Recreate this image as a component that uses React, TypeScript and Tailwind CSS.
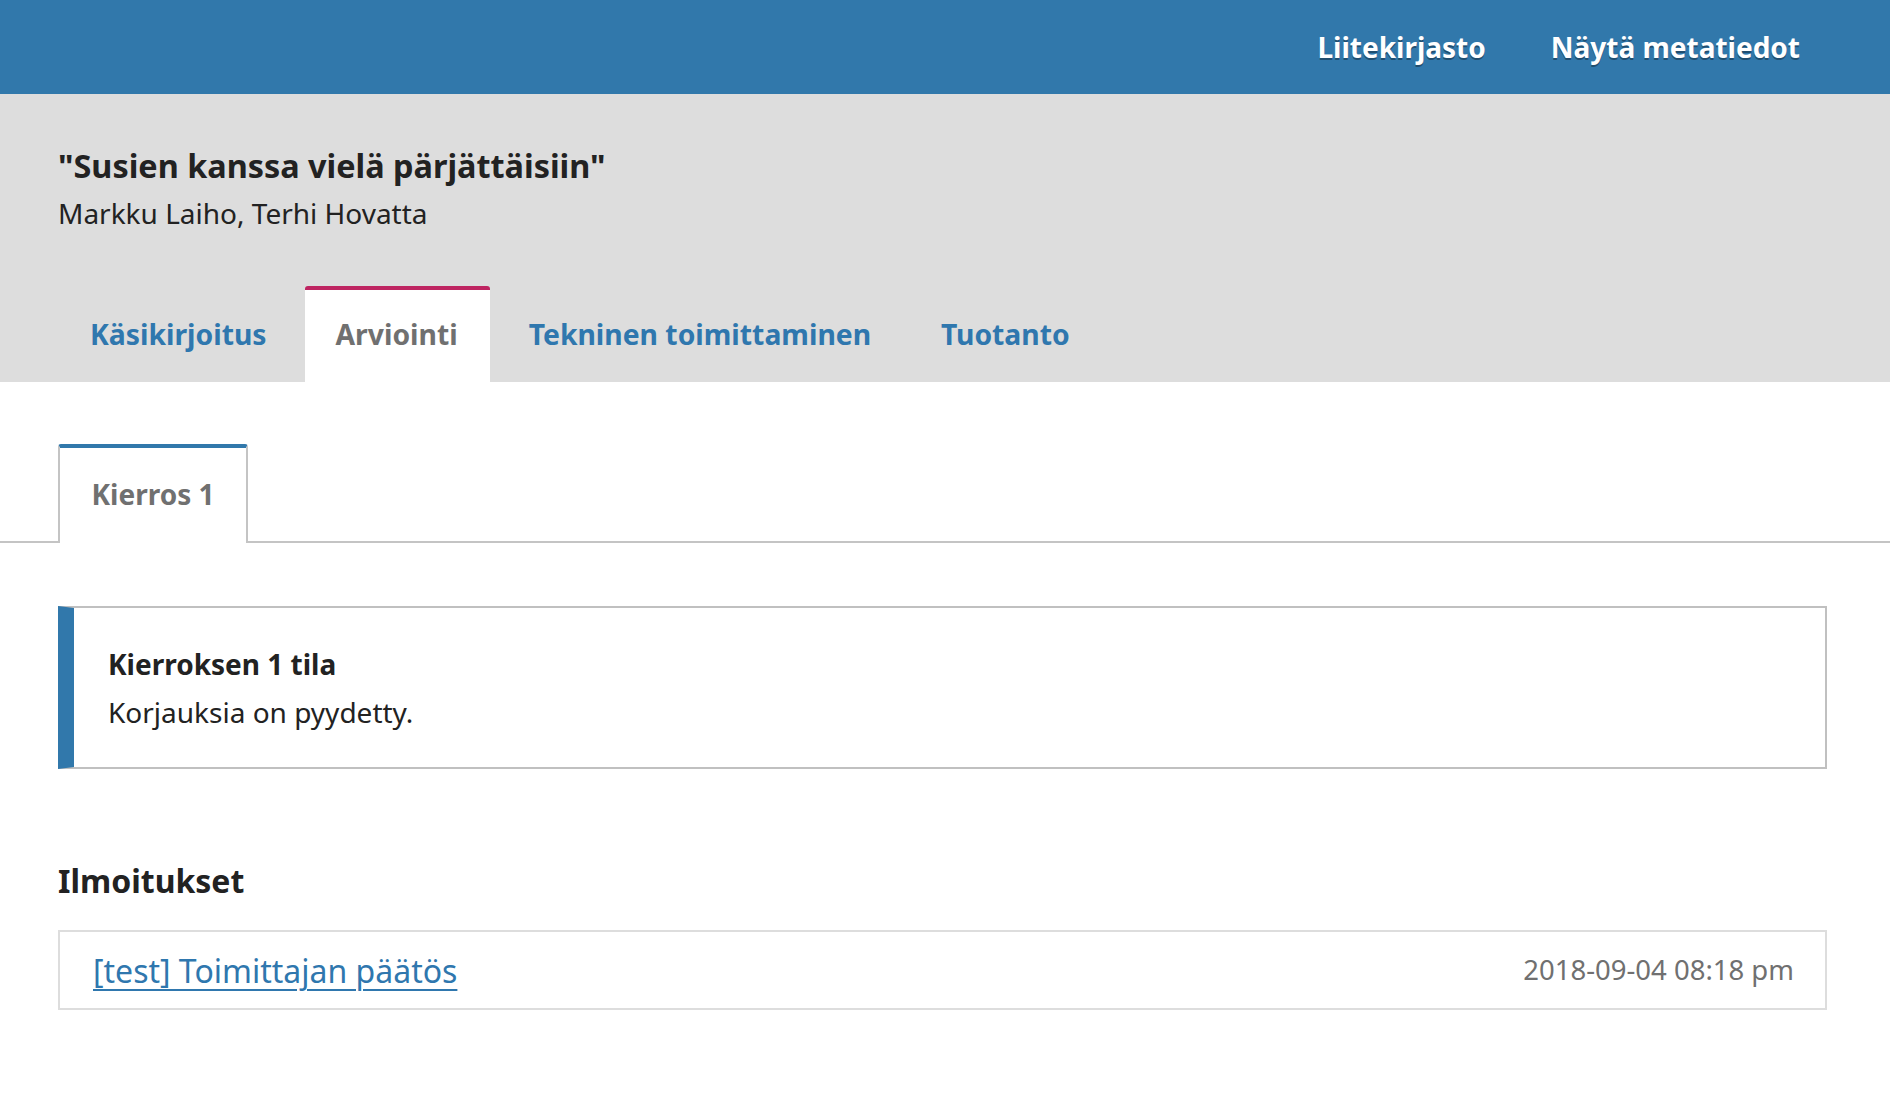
const font = { fontFamily: '"Noto Sans", "Open Sans", sans-serif' };

const tabs = [
  { label: 'Käsikirjoitus', active: false },
  { label: 'Arviointi', active: true },
  { label: 'Tekninen toimittaminen', active: false },
  { label: 'Tuotanto', active: false },
];

export default function App() {
  return (
    <div className="min-h-screen bg-white text-[#222]" style={font}>
      {/* top bar */}
      <div className="h-[94px] bg-[#3178ab] flex items-center justify-end pr-[90px] gap-[65px]">
        <a className="text-white font-bold text-[28px] [text-shadow:0_2px_0_rgba(0,0,0,0.35)]">Liitekirjasto</a>
        <a className="text-white font-bold text-[28px] [text-shadow:0_2px_0_rgba(0,0,0,0.35)]">Näytä metatiedot</a>
      </div>

      {/* submission header */}
      <div className="bg-[#dddddd] px-[58px] pt-[51px]">
        <h1 className="text-[32.4px] font-bold leading-[40px]">"Susien kanssa vielä pärjättäisiin"</h1>
        <div className="text-[28px] leading-[40px] mt-[8px]">Markku Laiho, Terhi Hovatta</div>
        <div className="flex gap-[7px] mt-[53px]">
          {tabs.map((t) =>
            t.active ? (
              <div
                key={t.label}
                className="h-[96px] pl-[31px] pr-[32px] pb-[4px] bg-white border-t-[4px] border-[#be2461] rounded-t-[3px] flex items-center text-[28.3px] font-bold text-[#707070]"
              >
                {t.label}
              </div>
            ) : (
              <a key={t.label} className="h-[96px] pl-[32px] pr-[31px] flex items-center text-[28.3px] font-bold text-[#2f77ae]">
                {t.label}
              </a>
            )
          )}
        </div>
      </div>

      {/* round tabs */}
      <div className="mt-[62px] border-b-2 border-[#c4c4c4] px-[58px] flex">
        <div className="h-[99px] w-[190px] -mb-[2px] pb-[4px] bg-white border-x-2 border-[#c4c4c4] border-t-[4px] border-t-[#3178ab] rounded-t-[3px] flex items-center justify-center text-[28px] font-bold text-[#707070]">
          Kierros 1
        </div>
      </div>

      <div className="px-[58px] pr-[63px]">
        {/* status */}
        <div className="mt-[63px] h-[163px] border-2 border-[#c0c0c0] border-l-[16px] border-l-[#3178ab] pl-[34px] flex flex-col justify-center">
          <div className="text-[28px] font-bold leading-[40px]">Kierroksen 1 tila</div>
          <div className="text-[28px] leading-[40px] mt-[8px]">Korjauksia on pyydetty.</div>
        </div>

        {/* notifications */}
        <h2 className="mt-[90px] text-[32px] font-bold leading-[44px]">Ilmoitukset</h2>
        <div className="mt-[27px] h-[80px] border-2 border-[#dddddd] flex items-center justify-between pl-[33px] pr-[31px]">
          <a className="text-[32px] text-[#2f77ae] underline underline-offset-[6px] decoration-[2px] translate-y-[1px]">[test] Toimittajan päätös</a>
          <span className="text-[27.5px] text-[#707070]">2018-09-04 08:18 pm</span>
        </div>
      </div>
    </div>
  );
}
